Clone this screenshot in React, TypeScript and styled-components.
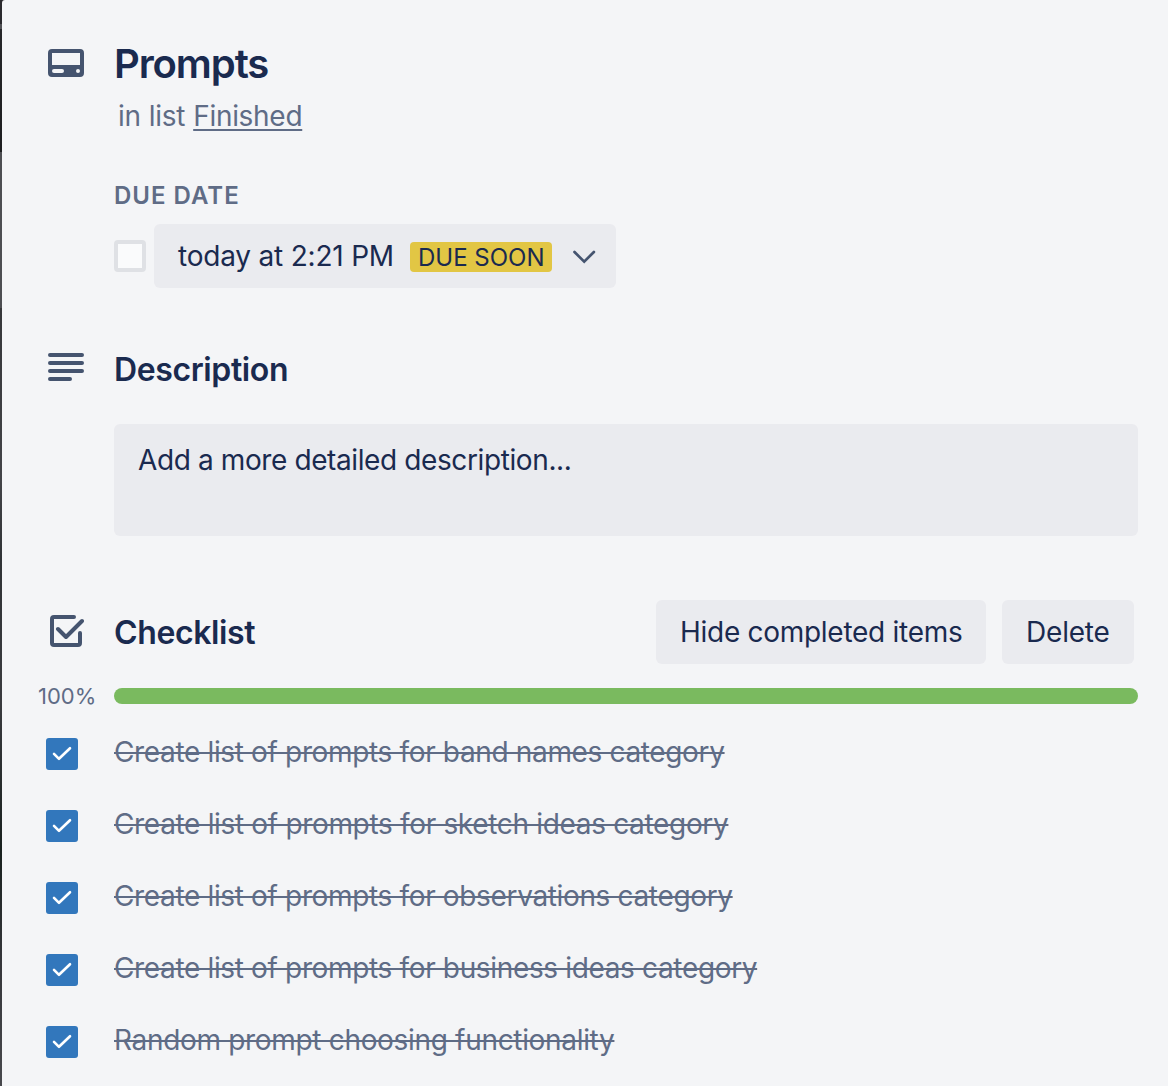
import React from 'react';
import styled, { createGlobalStyle } from 'styled-components';

const ink = '#1a2a4f';
const muted = '#5f6c86';
const iconColor = '#45546f';
const surface = '#eaebef';

const Global = createGlobalStyle`
  * { box-sizing: border-box; }
  body {
    margin: 0;
    background: #f4f5f7;
    font-family: Inter, "Liberation Sans", sans-serif;
    color: ${ink};
  }
`;

const Backdrop = styled.div`
  height: 1086px;
  overflow: hidden;
  padding-left: 2px;
  background: linear-gradient(
    #2a2a2e 0 24px,
    #505155 24px 29px,
    #26272a 29px,
    #1d1e20 152px,
    #4d4e52 152px,
    #4d4e52 308px,
    #36373a 308px,
    #434448 480px,
    #303336 560px,
    #3a3b3f 700px,
    #19211f 850px,
    #35363a 960px,
    #48494d 1086px
  );
`;

const Card = styled.main`
  height: 100%;
  background: #f4f5f7;
  border-top-left-radius: 3px;
  padding: 40px 30px 0 36px;
`;

const Row = styled.div<{ $gap?: number; $height?: number }>`
  display: grid;
  grid-template-columns: 76px 1fr;
  margin-top: ${p => p.$gap ?? 0}px;
  height: ${p => (p.$height ? `${p.$height}px` : 'auto')};
  align-items: center;
`;

const IconSlot = styled.div<{ $left?: number; $top: number }>`
  align-self: start;
  padding: ${p => p.$top}px 0 0 ${p => p.$left ?? 10}px;
  svg { display: block; }
`;

const Title = styled.h1`
  margin: 0;
  font-size: 40px;
  line-height: 48px;
  font-weight: 640;
  letter-spacing: -1.1px;
`;

const ListLine = styled.p`
  margin: 10px 0 0 80px;
  font-size: 28px;
  line-height: 36px;
  letter-spacing: -0.3px;
  word-spacing: 0.5px;
  color: ${muted};
`;

const ListLink = styled.span`
  text-decoration: underline;
  text-decoration-thickness: 2px;
  text-underline-offset: 3px;
  text-decoration-skip-ink: none;
`;

const Body = styled.div`
  margin-left: 76px;
`;

const Label = styled.h3`
  margin: 46px 0 0;
  font-size: 24px;
  line-height: 32px;
  font-weight: 560;
  letter-spacing: 1px;
  color: ${muted};
`;

const DueRow = styled.div`
  display: flex;
  align-items: center;
  gap: 8px;
  margin-top: 12px;
`;

const EmptyBox = styled.span`
  width: 32px;
  height: 32px;
  border: 4px solid #dfe1e5;
  border-radius: 4px;
  background: #fafbfc;
`;

const Button = styled.button<{ $width: number; $tracking?: number }>`
  width: ${p => p.$width}px;
  height: 64px;
  padding: 0 0 0 24px;
  display: flex;
  align-items: center;
  border: 0;
  border-radius: 6px;
  background: ${surface};
  color: ${ink};
  font: 400 28px/40px Inter, "Liberation Sans", sans-serif;
  letter-spacing: ${p => p.$tracking ?? -0.2}px;
  white-space: nowrap;
`;

const DueText = styled.span`
  width: 232px;
  text-align: left;
`;

const Badge = styled.span`
  width: 142px;
  height: 30px;
  margin-top: 2px;
  padding-left: 8px;
  border-radius: 4px;
  background: #e2c644;
  font-size: 24px;
  line-height: 31px;
  letter-spacing: 0;
  text-align: left;
`;

const Chevron = styled.svg`
  margin: 2px 0 0 20px;
`;

const Heading = styled.h2`
  margin: 0;
  padding-top: 2px;
  font-size: 32px;
  line-height: 40px;
  font-weight: 620;
  letter-spacing: -0.38px;
`;

const Description = styled.div`
  height: 112px;
  margin: 36px 0 0 76px;
  padding: 16px 24px;
  border-radius: 6px;
  background: ${surface};
  font-size: 28px;
  line-height: 40px;
  letter-spacing: -0.39px;
`;

const ChecklistHeader = styled.div`
  display: flex;
  align-items: center;
  justify-content: space-between;
  padding-right: 4px;
`;

const Actions = styled.div`
  display: flex;
  gap: 16px;
`;

const Percent = styled.span`
  font-size: 22px;
  line-height: 28px;
  color: ${muted};
`;

const Track = styled.div`
  height: 16px;
  border-radius: 8px;
  background: #7aba5f;
`;

const Items = styled.ul`
  list-style: none;
  margin: 12px 0 0;
  padding: 0;
`;

const Item = styled.li`
  display: grid;
  grid-template-columns: 68px 1fr;
  align-items: start;
  height: 72px;
  padding: 14px 0 0 8px;
`;

const CheckedBox = styled.span`
  width: 32px;
  height: 32px;
  margin-top: 2px;
  border-radius: 3px;
  background: #3277bc;
  svg { display: block; }
`;

const ItemText = styled.span<{ $tracking: number }>`
  font-size: 28px;
  line-height: 32px;
  letter-spacing: ${p => p.$tracking}px;
  color: ${muted};
  text-decoration: line-through;
  text-decoration-thickness: 2px;
  justify-self: start;
  white-space: nowrap;
`;

const items = [
  { text: 'Create list of prompts for band names category', tracking: -0.35 },
  { text: 'Create list of prompts for sketch ideas category', tracking: -0.33 },
  { text: 'Create list of prompts for observations category', tracking: -0.35 },
  { text: 'Create list of prompts for business ideas category', tracking: -0.35 },
  { text: 'Random prompt choosing functionality', tracking: -0.32 },
];

const CardIcon = () => (
  <svg width="36" height="28" viewBox="0 0 36 28">
    <path
      fill={iconColor}
      fillRule="evenodd"
      d="M4 0h28a4 4 0 0 1 4 4v20a4 4 0 0 1-4 4H4a4 4 0 0 1-4-4V4a4 4 0 0 1 4-4ZM4 4v12h28V4ZM6 20a2 2 0 0 0 0 4h8a2 2 0 0 0 0-4ZM30 20a2 2 0 0 0 0 4a2 2 0 0 0 0-4Z"
    />
  </svg>
);

const LinesIcon = () => (
  <svg width="36" height="28" viewBox="0 0 36 28" stroke={iconColor} strokeWidth="4" strokeLinecap="round">
    <path d="M2 2h32M2 10h32M2 18h32M2 26h20" />
  </svg>
);

const ChecklistIcon = () => (
  <svg width="34" height="32" viewBox="0 0 34 32" fill="none" stroke={iconColor} strokeWidth="4" strokeLinecap="round" strokeLinejoin="round">
    <path d="M24 2H4a2 2 0 0 0-2 2v24a2 2 0 0 0 2 2h24a2 2 0 0 0 2-2V18" />
    <path d="M8 14l8 8L32 6" />
  </svg>
);

export default function App() {
  return (
    <>
      <Global />
      <Backdrop>
        <Card>
          <Row $height={48}>
            <IconSlot $top={9}><CardIcon /></IconSlot>
            <Title>Prompts</Title>
          </Row>
          <ListLine>in list <ListLink>Finished</ListLink></ListLine>
          <Body>
            <Label>DUE DATE</Label>
            <DueRow>
              <EmptyBox />
              <Button $width={462}>
                <DueText>today at 2:21 PM</DueText>
                <Badge>DUE SOON</Badge>
                <Chevron width="24" height="14" viewBox="0 0 24 14" fill="none" stroke={iconColor} strokeWidth="2.7" strokeLinecap="round">
                  <path d="M2.5 2l9.7 9.7L21.9 2" />
                </Chevron>
              </Button>
            </DueRow>
          </Body>
          <Row $gap={60} $height={40}>
            <IconSlot $top={5}><LinesIcon /></IconSlot>
            <Heading>Description</Heading>
          </Row>
          <Description>Add a more detailed description...</Description>
          <Row $gap={64} $height={64}>
            <IconSlot $left={12} $top={15}><ChecklistIcon /></IconSlot>
            <ChecklistHeader>
              <Heading>Checklist</Heading>
              <Actions>
                <Button $width={330} $tracking={-0.28}>Hide completed items</Button>
                <Button $width={132}>Delete</Button>
              </Actions>
            </ChecklistHeader>
          </Row>
          <Row $gap={18} $height={28}>
            <Percent>100%</Percent>
            <Track />
          </Row>
          <Items>
            {items.map(({ text, tracking }) => (
              <Item key={text}>
                <CheckedBox>
                  <svg width="32" height="32" viewBox="0 0 32 32" fill="none" stroke="#fff" strokeWidth="2.6" strokeLinecap="round" strokeLinejoin="round">
                    <path d="M8 15.8l5 5L24 10.2" />
                  </svg>
                </CheckedBox>
                <ItemText $tracking={tracking}>{text}</ItemText>
              </Item>
            ))}
          </Items>
        </Card>
      </Backdrop>
    </>
  );
}
